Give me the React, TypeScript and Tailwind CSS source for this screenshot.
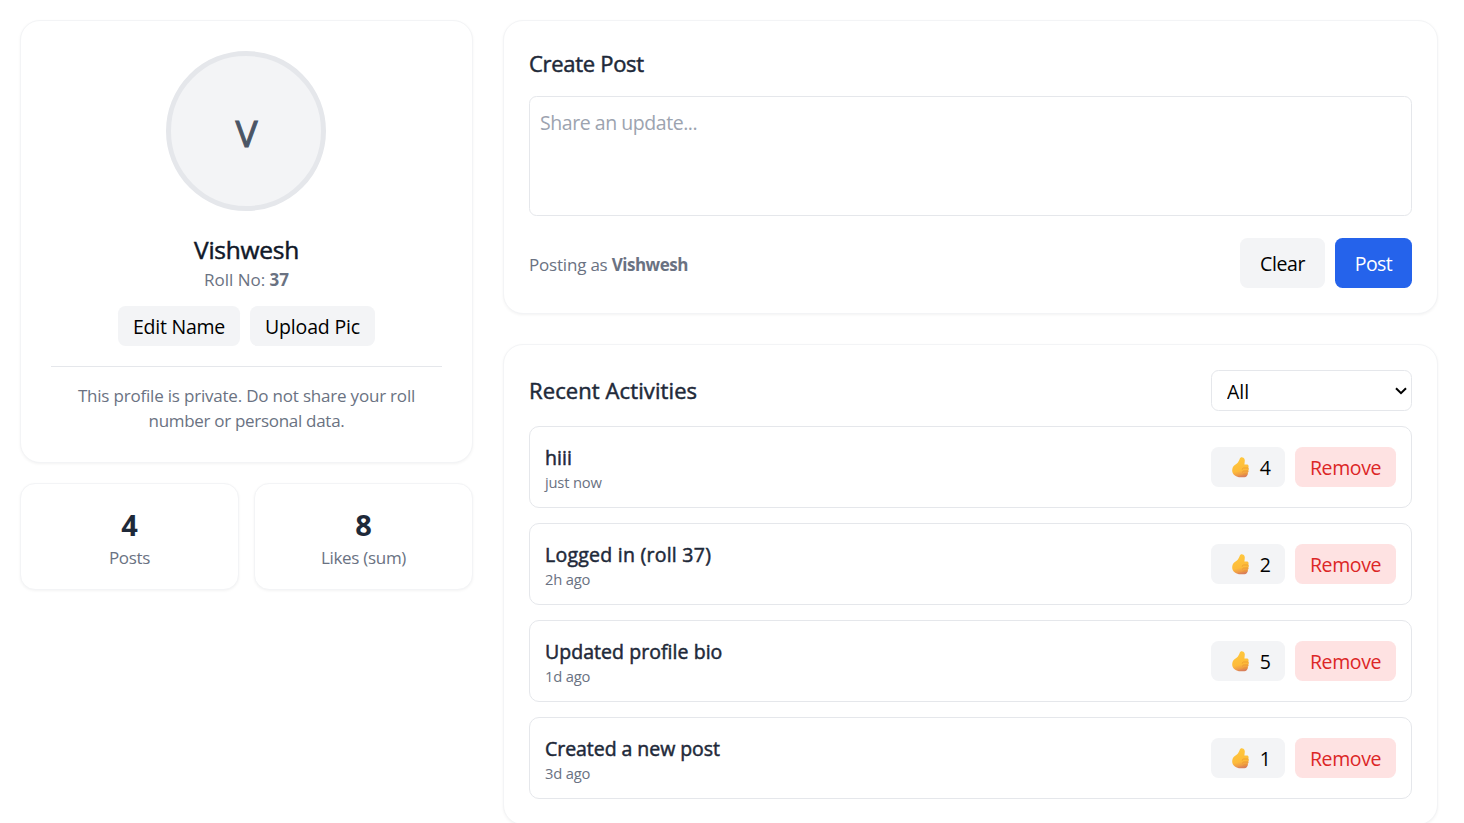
import React, { useState } from 'react'

type Activity = { id: number; title: string; time: string; likes: number; tracking: string }

const INITIAL: Activity[] = [
  { id: 1, title: 'hiii', time: 'just now', likes: 4, tracking: 'tracking-[0.05px]' },
  { id: 2, title: 'Logged in (roll 37)', time: '2h ago', likes: 2, tracking: 'tracking-[0.25px]' },
  { id: 3, title: 'Updated profile bio', time: '1d ago', likes: 5, tracking: 'tracking-[0.05px]' },
  { id: 4, title: 'Created a new post', time: '3d ago', likes: 1, tracking: 'tracking-[-0.05px]' },
]

const CARD = 'border border-gray-100 bg-white shadow-[0_1px_3px_rgba(0,0,0,0.05)]'
const MEDIUM = '[-webkit-text-stroke:0.5px_currentColor]'

function ThumbsUp() {
  return (
    <svg width="17" height="21" viewBox="0 0 17 21" className="shrink-0" aria-hidden="true">
      <defs>
        <linearGradient id="thumb" x1="0.2" y1="0" x2="0.4" y2="1">
          <stop offset="0" stopColor="#ffc83d" />
          <stop offset="0.7" stopColor="#fdbb3a" />
          <stop offset="0.9" stopColor="#ee9a48" />
          <stop offset="1" stopColor="#d9805a" />
        </linearGradient>
      </defs>
      <path
        d="M7.600 2.300C8 .8 9.100.2 10.400.4c1.600.2 2.400 1.400 2.400 3 0 1.500-.4 2.800-.4 4.100h2.300c1.100 0 1.900.7 1.900 1.700 0 .6-.2 1-.5 1.300.5.3.8.9.8 1.500s-.3 1.200-.8 1.500c.3.4.4.8.3 1.300-.1.600-.4 1-.8 1.300.2.4.2.800.1 1.200-.3 1.500-1.300 2.900-3.200 2.900H8.500c-2.300 0-4-.6-5.600-1.800C1.100 17.200.2 15.700.2 13.500c0-2.300.7-3.900 2.300-5.300C4 6.900 5.300 6.300 6.200 4.900 6.800 4 7.300 3.300 7.600 2.300Z"
        fill="url(#thumb)"
      />
      <path
        d="M16.100 11h-4.300c-1 0-1.600.6-1.600 1.300M16.200 14h-4.400c-.8 0-1.300.5-1.300 1.100M15.600 16.800h-3.600c-.6 0-1 .4-1 .9"
        fill="none"
        stroke="#e8962f"
        strokeWidth="0.7"
        strokeLinecap="round"
      />
    </svg>
  )
}

function Stat({ value, label }: { value: number; label: string }) {
  return (
    <div className={`${CARD} flex-1 rounded-[15px] pt-5 pb-[19px] text-center`}>
      <div className="pt-px pb-px text-[29px] leading-[39px] font-bold text-gray-800">{value}</div>
      <div className="text-[17px] leading-[25px] tracking-[-0.3px] text-gray-500">{label}</div>
    </div>
  )
}

function ActivityRow({ item, onLike, onRemove }: { item: Activity; onLike: () => void; onRemove: () => void }) {
  return (
    <li className="flex items-center justify-between rounded-[10px] border border-gray-200 p-[15px]">
      <div>
        <div className={`pt-0.5 text-[19.5px] leading-7 text-gray-800 ${MEDIUM} ${item.tracking}`}>{item.title}</div>
        <div className="text-[14.75px] leading-5 tracking-[-0.2px] text-gray-500">{item.time}</div>
      </div>
      <div className="flex gap-2.5">
        <button
          onClick={onLike}
          className="flex h-10 w-[74px] items-center rounded-[7.5px] bg-gray-100 pl-[20.5px] text-[19.5px] leading-10 text-black"
        >
          <ThumbsUp />
          <span className="ml-auto pt-px pr-[14px]">{item.likes}</span>
        </button>
        <button
          onClick={onRemove}
          className="h-10 w-[101px] rounded-[7.5px] bg-[#fee2e2] pt-px text-[19.5px] leading-[39px] tracking-[-0.4px] text-[#dc2626]"
        >
          Remove
        </button>
      </div>
    </li>
  )
}

export default function App() {
  const [items, setItems] = useState(INITIAL)
  const [draft, setDraft] = useState('')

  const post = () => {
    if (!draft.trim()) return
    setItems([{ id: Date.now(), title: draft, time: 'just now', likes: 0, tracking: 'tracking-normal' }, ...items])
    setDraft('')
  }

  return (
    <div className="flex h-screen items-start gap-[30px] overflow-hidden bg-white p-5 font-['Open_Sans','Noto_Sans',sans-serif]">
      <aside className="flex w-[453px] shrink-0 flex-col gap-5">
        <section className={`${CARD} flex flex-col items-center rounded-[20px] p-[30px]`}>
          <div className="mr-px flex size-40 items-center justify-center rounded-full border-[5px] border-gray-200 bg-gray-100 pt-[3px] pl-px text-[37px] text-gray-600 [-webkit-text-stroke:1px_currentColor]">
            V
          </div>
          <h2 className={`mt-[21px] text-[24.5px] leading-[35px] tracking-[-0.25px] text-gray-900 ${MEDIUM}`}>Vishwesh</h2>
          <p className="text-[17px] leading-[25px] text-gray-500">
            Roll No: <strong className="font-bold">37</strong>
          </p>
          <div className="mt-[14px] flex gap-2.5 text-[19.5px] leading-[39px] text-black">
            <button className="h-10 w-[122px] rounded-[7.5px] bg-gray-100 pt-px tracking-[-0.24px]">Edit Name</button>
            <button className="h-10 w-[125px] rounded-[7.5px] bg-gray-100 pt-px tracking-[-0.16px]">Upload Pic</button>
          </div>
          <p className="mt-5 -mb-px w-full border-t border-gray-200 pt-4 text-center text-[17px] leading-[25px] tracking-[-0.2px] text-gray-500">
            This profile is private. Do not share your roll
            <br />
            <span className="tracking-[-0.3px]">number or personal data.</span>
          </p>
        </section>
        <div className="flex gap-[15px]">
          <Stat value={4} label="Posts" />
          <Stat value={8} label="Likes (sum)" />
        </div>
      </aside>

      <main className="flex w-[935px] shrink-0 flex-col gap-[30px]">
        <section className={`${CARD} rounded-[20px] p-[25px]`}>
          <h3 className={`text-[22px] leading-[35px] tracking-[-0.3px] text-gray-800 ${MEDIUM}`}>Create Post</h3>
          <textarea
            value={draft}
            onChange={(e) => setDraft(e.target.value)}
            placeholder="Share an update..."
            className="mt-[15px] block h-[120px] w-full resize-none rounded-[7.5px] border border-gray-200 px-2.5 py-[11px] text-[19.5px] leading-[30px] tracking-[-0.45px] text-black outline-none placeholder:text-[#9ca3af]"
          />
          <div className="mt-[22px] flex items-center justify-between">
            <p className="pt-[3px] text-[17px] leading-[25px] tracking-[-0.2px] text-gray-500">
              Posting as <strong className="font-bold tracking-[-0.5px]">Vishwesh</strong>
            </p>
            <div className="flex gap-2.5 text-[19.5px]">
              <button
                onClick={() => setDraft('')}
                className="h-[50px] w-[85px] rounded-[7.5px] bg-gray-100 pt-px tracking-[-0.4px] text-black"
              >
                Clear
              </button>
              <button
                onClick={post}
                className="h-[50px] w-[77px] rounded-[7.5px] bg-[#2563eb] pt-px tracking-[-0.6px] text-white"
              >
                Post
              </button>
            </div>
          </div>
        </section>

        <section className={`${CARD} rounded-[20px] p-[25px]`}>
          <div className="flex items-center justify-between">
            <h3 className={`text-[22px] leading-[35px] tracking-[0.1px] text-gray-800 ${MEDIUM}`}>Recent Activities</h3>
            <div className="relative">
              <select className="block h-[41px] w-[201px] appearance-none rounded-[7.5px] border border-gray-200 bg-white px-[15px] pt-[3px] text-[19.5px] text-black">
                <option>All</option>
                <option>Posts</option>
              </select>
              <svg
                className="pointer-events-none absolute top-[17px] right-[5px]"
                width="12"
                height="8"
                viewBox="0 0 12 8"
                fill="none"
                stroke="#000"
                strokeWidth="2"
                aria-hidden="true"
              >
                <path d="M1 1.200 6 6.200l5-5" />
              </svg>
            </div>
          </div>
          <ul className="mt-[15px] flex flex-col gap-[15px]">
            {items.map((item) => (
              <ActivityRow
                key={item.id}
                item={item}
                onLike={() => setItems(items.map((i) => (i.id === item.id ? { ...i, likes: i.likes + 1 } : i)))}
                onRemove={() => setItems(items.filter((i) => i.id !== item.id))}
              />
            ))}
          </ul>
        </section>
      </main>
    </div>
  )
}
